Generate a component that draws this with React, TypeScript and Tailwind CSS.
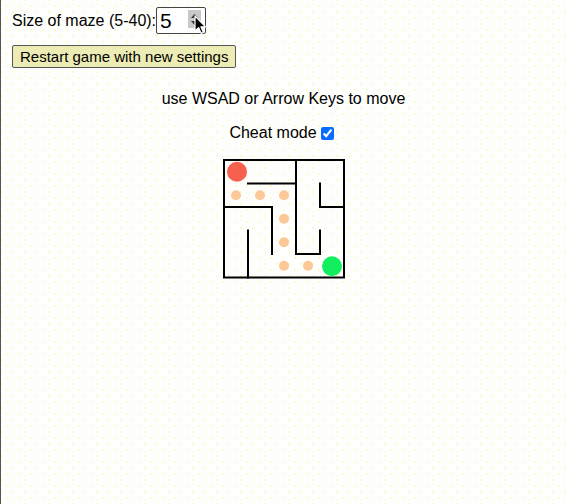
import React from "react";

const X = [1, 25, 49, 73, 97, 121];
const Y = [1, 24.5, 48, 71.5, 95, 118.5];

const walls: [number, number, number, number][] = [
  [1, 1, 3, 1],
  [3, 0, 3, 4],
  [3, 4, 4, 4],
  [4, 3, 4, 4],
  [4, 1, 4, 2],
  [4, 2, 5, 2],
  [0, 2, 2, 2],
  [2, 2, 2, 4],
  [1, 3, 1, 5],
];

const cx = (c: number) => (X[c] + X[c + 1]) / 2;
const cy = (r: number) => (Y[r] + Y[r + 1]) / 2;

const path: [number, number][] = [
  [0, 1],
  [1, 1],
  [2, 1],
  [2, 2],
  [2, 3],
  [2, 4],
  [3, 4],
];

function Maze() {
  return (
    <svg width="122" height="120" viewBox="0 0 122 120" className="block">
      <rect x="1" y="1" width="120" height="117.5" fill="none" stroke="#000" strokeWidth="2" />
      {walls.map(([a, b, c, d], i) => (
        <line
          key={i}
          x1={X[a]}
          y1={Y[b]}
          x2={X[c]}
          y2={Y[d]}
          stroke="#000"
          strokeWidth="2"
          strokeLinecap="square"
        />
      ))}
      {path.map(([c, r], i) => (
        <circle key={i} cx={cx(c)} cy={cy(r)} r="5" fill="#fcc898" />
      ))}
      <circle cx={cx(0) + 1} cy={cy(0)} r="10" fill="#f5604f" />
      <circle cx={cx(4)} cy={cy(4) + 0.5} r="10" fill="#12ef5e" />
    </svg>
  );
}

export default function App() {
  return (
    <div className="min-h-[504px] w-full border-l border-[#555] bg-[#fefefc] bg-[radial-gradient(circle,#f8f8a0_0.5px,transparent_0.9px),radial-gradient(circle,#f8f8a0_0.5px,transparent_0.9px)] bg-[length:12px_12px] bg-[position:0_0,6px_6px] text-black font-['Liberation_Sans',Arial,sans-serif]">
      <div className="pl-[11px] pt-[7px]">
        <div className="flex items-center h-[27px]">
          <span className="text-[16px] leading-[18px]">Size of maze (5-40):</span>
          <div className="relative w-[50px] h-[27px] border border-[#444] rounded-[2px] bg-white flex items-center">
            <span className="ml-[3px] text-[21px] leading-[24px]">5</span>
            <div className="absolute left-[31px] top-[2px] w-[13px] h-[18px] bg-[#c8c8c8] flex flex-col items-center justify-center gap-[3px]">
              <svg width="7" height="4" viewBox="0 0 7 4"><path d="M0 4 L3.5 0 L7 4 Z" fill="#333" /></svg>
              <svg width="7" height="4" viewBox="0 0 7 4"><path d="M0 0 L3.5 4 L7 0 Z" fill="#333" /></svg>
            </div>
            <svg className="absolute left-[37px] top-[7px]" width="13" height="20" viewBox="0 0 13 20">
              <path d="M1 1 L1 16 L4.6 12.6 L7.2 18.4 L9.4 17.4 L6.9 11.8 L11.6 11.8 Z" fill="#000" stroke="#fff" strokeWidth="1.2" strokeLinejoin="round" />
            </svg>
          </div>
        </div>
        <button className="mt-[11px] h-[23px] px-[7px] border border-[#555] rounded-[2px] bg-[#ececb4] text-[15px] leading-[17px] text-black">
          Restart game with new settings
        </button>
      </div>
      <p className="mt-[21px] text-center text-[16px] leading-[18px]">use WSAD or Arrow Keys to move</p>
      <div className="mt-[16px] flex justify-center items-center text-[16px] leading-[18px] pr-[4px]">
        <span>Cheat mode</span>
        <input type="checkbox" checked readOnly className="ml-[4px] w-[13px] h-[13px] accent-[#0a6cff]" />
      </div>
      <div className="mt-[17px] flex justify-center">
        <Maze />
      </div>
    </div>
  );
}
